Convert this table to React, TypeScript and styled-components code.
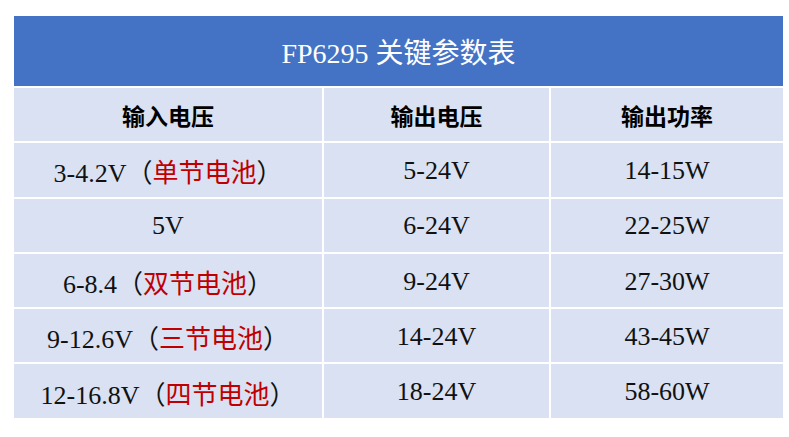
import { Fragment } from "react";
import styled, { createGlobalStyle } from "styled-components";

const GlobalStyle = createGlobalStyle`
  html, body {
    margin: 0;
    padding: 0;
    background: #ffffff;
  }
`;

type Row = {
  input: string;
  note?: string;
  output: string;
  power: string;
};

const rows: Row[] = [
  { input: "3-4.2V", note: "单节电池", output: "5-24V", power: "14-15W" },
  { input: "5V", output: "6-24V", power: "22-25W" },
  { input: "6-8.4", note: "双节电池", output: "9-24V", power: "27-30W" },
  { input: "9-12.6V", note: "三节电池", output: "14-24V", power: "43-45W" },
  { input: "12-16.8V", note: "四节电池", output: "18-24V", power: "58-60W" },
];

export default function App() {
  return (
    <>
      <GlobalStyle />
      <Page>
        <Table>
          <Title>FP6295 关键参数表</Title>
          <HeadCell>输入电压</HeadCell>
          <HeadCell>输出电压</HeadCell>
          <HeadCell>输出功率</HeadCell>
          {rows.map((r) => (
            <Fragment key={r.input}>
              <Cell>
                {r.input}
                {r.note && (
                  <>
                    （<Note>{r.note}</Note>）
                  </>
                )}
              </Cell>
              <Cell>{r.output}</Cell>
              <Cell>{r.power}</Cell>
            </Fragment>
          ))}
        </Table>
      </Page>
    </>
  );
}

const Page = styled.div`
  width: 789px;
  height: 437px;
  padding: 16px 0 0 14px;
  box-sizing: border-box;
  background: #ffffff;
`;

const Table = styled.div`
  width: 765px;
  display: grid;
  grid-template-columns: 308px 225px 232px;
  grid-template-rows: 70px;
  grid-auto-rows: 53.3px;
  gap: 2px;
  background: #ffffff;
`;

const Title = styled.div`
  grid-column: 1 / -1;
  background: #4472c4;
  color: #ffffff;
  display: flex;
  align-items: center;
  justify-content: center;
  font-family: "Liberation Serif", "Noto Sans CJK SC", serif;
  font-size: 28px;
`;

const HeadCell = styled.div`
  background: #d9e1f2;
  color: #000000;
  display: flex;
  align-items: center;
  justify-content: center;
  font-family: "Noto Sans CJK SC", sans-serif;
  font-weight: 700;
  font-size: 23px;
`;

const Cell = styled.div`
  background: #d9e1f2;
  color: #111111;
  display: flex;
  align-items: center;
  justify-content: center;
  padding-top: 2px;
  white-space: pre;
  font-family: "Liberation Serif", "Noto Sans CJK SC", serif;
  font-size: 26px;
`;

const Note = styled.span`
  color: #c00000;
`;
